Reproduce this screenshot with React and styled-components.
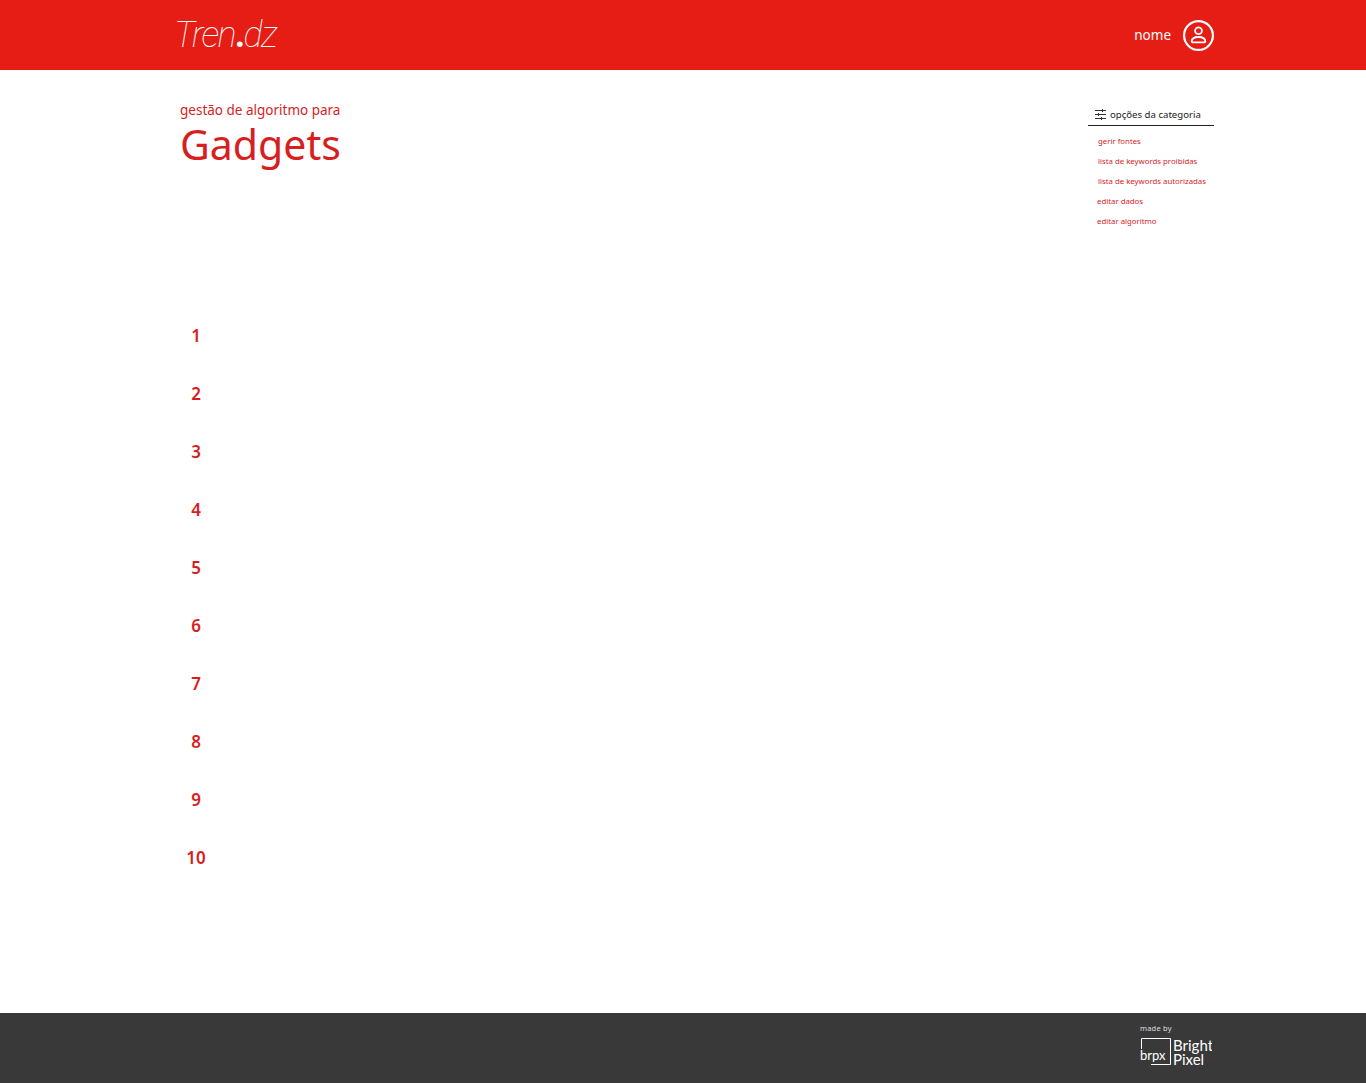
import React from "react";
import styled, { createGlobalStyle } from "styled-components";

const RED = "#e51d14";
const TEXT_RED = "#d81e1e";
const FONT = `"Noto Sans", "Open Sans", Arial, sans-serif`;

const Global = createGlobalStyle`
  html, body { margin: 0; padding: 0; background: #fff; }
  body { font-family: ${FONT}; }
`;

const OPTIONS = [
  { label: "gerir fontes", indent: 10 },
  { label: "lista de keywords proibidas", indent: 10 },
  { label: "lista de keywords autorizadas", indent: 10 },
  { label: "editar dados", indent: 9 },
  { label: "editar algoritmo", indent: 9 },
];

const RANKS = [1, 2, 3, 4, 5, 6, 7, 8, 9, 10];

const App = () => (
  <Page>
    <Global />
    <Header>
      <HeaderInner>
        <Logo>
          Tren<LogoDot>.</LogoDot>dz
        </Logo>
        <User>
          <UserName>nome</UserName>
          <Avatar viewBox="0 0 31 31" fill="none" stroke="#fff">
            <circle cx="15.5" cy="15.5" r="14.4" strokeWidth="2.2" />
            <circle cx="15.5" cy="10.8" r="3.4" strokeWidth="1.8" />
            <path
              d="M8.7 21.600c0-3.200 2.600-4.600 6.800-4.600s6.800 1.400 6.800 4.600c0 .5-.3.7-.8.7H9.500c-.5 0-.8-.2-.8-.7z"
              strokeWidth="1.8"
            />
          </Avatar>
        </User>
      </HeaderInner>
    </Header>
    <Main>
      <Top>
        <Heading>
          <Kicker>gestão de algoritmo para</Kicker>
          <Title>Gadgets</Title>
        </Heading>
        <Options>
          <OptionsHead>
            <SlidersIcon viewBox="0 0 11 11" stroke="#333" strokeWidth="1" fill="none">
              <path d="M0 1.500h11M0 5.500h11M0 9.500h11M7.500 0v3M3.500 4v3M6.500 8v3" />
            </SlidersIcon>
            opções da categoria
          </OptionsHead>
          <OptionList>
            {OPTIONS.map((o) => (
              <OptionItem key={o.label} $indent={o.indent}>
                {o.label}
              </OptionItem>
            ))}
          </OptionList>
        </Options>
      </Top>
      <Ranks>
        {RANKS.map((n) => (
          <Rank key={n}>{n}</Rank>
        ))}
      </Ranks>
    </Main>
    <Footer>
      <FooterInner>
        <MadeBy>made by</MadeBy>
        <BrandMark viewBox="0 0 72 31" fill="none">
          <path d="M1.500 13V2.500h29v26H11" stroke="#fff" strokeWidth="1" />
          <text x="0" y="24" fill="#fff" fontSize="13" fontFamily="Lato, sans-serif">
            brpx
          </text>
          <text x="33" y="15" fill="#fff" fontSize="15" fontFamily="Lato, sans-serif">
            Bright
          </text>
          <text x="33" y="29" fill="#fff" fontSize="15" fontFamily="Lato, sans-serif">
            Pixel
          </text>
        </BrandMark>
      </FooterInner>
    </Footer>
  </Page>
);

const Page = styled.div`
  min-height: 100vh;
  display: flex;
  flex-direction: column;
`;

const Header = styled.header`
  height: 70px;
  background: ${RED};
  flex-shrink: 0;
`;

const HeaderInner = styled.div`
  height: 100%;
  width: 1038px;
  margin-left: 176px;
  display: flex;
  align-items: center;
  justify-content: space-between;
`;

const Logo = styled.div`
  margin-left: -2px;
  font-family: Roboto, sans-serif;
  font-weight: 100;
  font-style: italic;
  font-size: 36px;
  letter-spacing: -1.7px;
  color: #fff;
`;

const LogoDot = styled.span`
  font-weight: 700;
  font-style: normal;
`;

const User = styled.div`
  display: flex;
  align-items: center;
  gap: 12px;
`;

const UserName = styled.span`
  font-size: 13.5px;
  line-height: 18px;
  color: #fff;
`;

const Avatar = styled.svg`
  width: 31px;
  height: 31px;
  display: block;
`;

const Main = styled.main`
  flex: 1;
  width: 1038px;
  margin-left: 176px;
  display: flex;
  flex-direction: column;
`;

const Top = styled.div`
  display: flex;
  justify-content: space-between;
  align-items: flex-start;
  height: 237px;
  padding-top: 31px;
  box-sizing: border-box;
`;

const Heading = styled.div`
  padding-left: 4px;
`;

const Kicker = styled.div`
  font-size: 13.5px;
  line-height: 18px;
  color: ${TEXT_RED};
`;

const Title = styled.h1`
  margin: 0;
  font-size: 41px;
  line-height: 50px;
  font-weight: 400;
  color: ${TEXT_RED};
`;

const Options = styled.aside`
  width: 126px;
  padding-top: 6px;
`;

const OptionsHead = styled.div`
  display: flex;
  align-items: center;
  gap: 4px;
  height: 14px;
  padding: 0 0 4px 7px;
  border-bottom: 1px solid #222;
  font-size: 9.6px;
  color: #222;
  white-space: nowrap;
`;

const SlidersIcon = styled.svg`
  width: 11px;
  height: 11px;
  display: block;
`;

const OptionList = styled.ul`
  list-style: none;
  margin: 5px 0 0;
  padding: 0;
`;

const OptionItem = styled.li`
  height: 20px;
  line-height: 20px;
  padding-left: ${(p) => p.$indent}px;
  font-size: 7.8px;
  color: ${TEXT_RED};
  white-space: nowrap;
`;

const Ranks = styled.ol`
  list-style: none;
  margin: 0;
  padding: 0;
  width: 40px;
`;

const Rank = styled.li`
  height: 58px;
  line-height: 58px;
  text-align: center;
  font-size: 17px;
  font-weight: 600;
  color: ${TEXT_RED};
`;

const Footer = styled.footer`
  height: 70px;
  background: #393939;
  flex-shrink: 0;
`;

const FooterInner = styled.div`
  width: 72px;
  margin-left: 1140px;
  padding-top: 10px;
`;

const MadeBy = styled.div`
  font-size: 7.5px;
  line-height: 10px;
  color: #ddd;
  letter-spacing: 0.2px;
`;

const BrandMark = styled.svg`
  width: 72px;
  height: 31px;
  display: block;
  margin-top: 3px;
`;

export default App;
